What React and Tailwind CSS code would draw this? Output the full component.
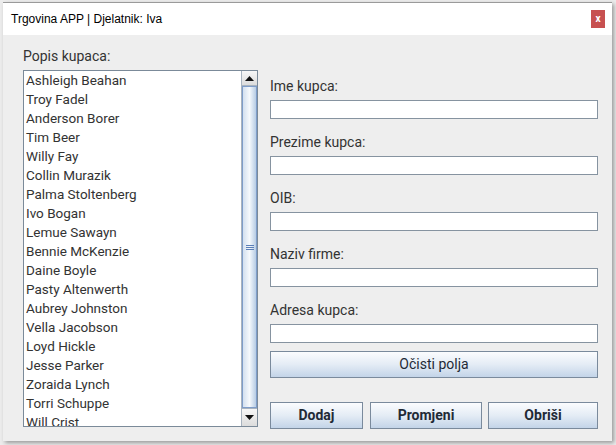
const customers = [
  "Ashleigh Beahan",
  "Troy Fadel",
  "Anderson Borer",
  "Tim Beer",
  "Willy Fay",
  "Collin Murazik",
  "Palma Stoltenberg",
  "Ivo Bogan",
  "Lemue Sawayn",
  "Bennie McKenzie",
  "Daine Boyle",
  "Pasty Altenwerth",
  "Aubrey Johnston",
  "Vella Jacobson",
  "Loyd Hickle",
  "Jesse Parker",
  "Zoraida Lynch",
  "Torri Schuppe",
  "Will Crist",
];

const fields = ["Ime kupca:", "Prezime kupca:", "OIB:", "Naziv firme:", "Adresa kupca:"];

const btn =
  "h-[27px] border border-[#7a8a9c] bg-gradient-to-b from-[#fbfcfe] via-[#e4ecf5] to-[#c3d4e8] text-[#1f2a36] flex items-center justify-center";

function ArrowBtn({ up, h }) {
  return (
    <div
      className={`${h} shrink-0 flex items-center justify-center bg-gradient-to-b from-[#f7f7f7] to-[#dcdcdc] ${
        up ? "border-b" : "border-t"
      } border-[#a8b3bf]`}
    >
      <svg width="9" height="5" viewBox="0 0 9 5">
        {up ? <path d="M0 5 L4.5 0 L9 5 Z" fill="#111" /> : <path d="M0 0 L4.5 5 L9 0 Z" fill="#111" />}
      </svg>
    </div>
  );
}

export default function App() {
  return (
    <div className="w-[616px] h-[445px] bg-[#ececec] pt-[2px] pl-[3px] overflow-hidden font-['Roboto',sans-serif]">
      <div className="w-[609px] h-[439px] flex flex-col border-t border-[#9a9a9a] shadow-[2px_2px_4px_rgba(0,0,0,0.35)]">
        <div className="h-[32px] shrink-0 bg-white flex items-center pl-[8px] pr-[7px]">
          <span className="text-[12px] text-black font-['Liberation_Sans',sans-serif]">
            Trgovina APP | Djelatnik: Iva
          </span>
          <div className="ml-auto w-[14px] h-[18px] bg-[#c75050] flex items-center justify-center text-white text-[10px] font-bold leading-none">
            x
          </div>
        </div>

        <div className="flex-1 bg-[#eeeeee] flex items-start pl-[20px] pt-[13px] gap-[12px] text-[#333]">
          <div className="w-[235px] flex flex-col">
            <div className="h-[17px] mb-[5px] text-[14px] leading-[17px]">Popis kupaca:</div>
            <div className="h-[357px] border border-[#7b8a99] bg-white flex">
              <ul className="flex-1 overflow-hidden pl-[2px] text-[13.5px]">
                {customers.map((c) => (
                  <li key={c} className="h-[19px] leading-[19px] whitespace-nowrap">
                    {c}
                  </li>
                ))}
              </ul>
              <div className="w-[16px] shrink-0 border-l border-[#a8b3bf] flex flex-col bg-[#e8edf3]">
                <ArrowBtn up h="h-[15px]" />
                <div className="flex-1 border border-[#7f9dc9] bg-gradient-to-r from-[#d3e0ef] via-[#f6f9fc] to-[#b7cce4] flex items-center justify-center">
                  <div className="flex flex-col gap-[1px]">
                    <div className="w-[8px] h-[1px] bg-[#5b7fb8]" />
                    <div className="w-[8px] h-[1px] bg-[#5b7fb8]" />
                    <div className="w-[8px] h-[1px] bg-[#5b7fb8]" />
                  </div>
                </div>
                <ArrowBtn h="h-[18px]" />
              </div>
            </div>
          </div>

          <div className="w-[328px] pt-[30px] flex flex-col">
            <div className="flex flex-col gap-[15px]">
              {fields.map((f) => (
                <div key={f} className="flex flex-col">
                  <div className="h-[17px] mb-[5px] text-[14px] leading-[17px]">{f}</div>
                  <div className="h-[19px] border border-[#8693a0] bg-white" />
                </div>
              ))}
            </div>
            <button className={`${btn} mt-[8px] w-full text-[14px]`}>Očisti polja</button>
            <div className="mt-[24px] flex">
              <button className={`${btn} w-[93px] text-[14px] font-bold`}>Dodaj</button>
              <button className={`${btn} w-[112px] ml-[7px] text-[14px] font-bold`}>Promjeni</button>
              <button className={`${btn} flex-1 ml-[6px] text-[14px] font-bold`}>Obriši</button>
            </div>
          </div>
        </div>
      </div>
    </div>
  );
}
